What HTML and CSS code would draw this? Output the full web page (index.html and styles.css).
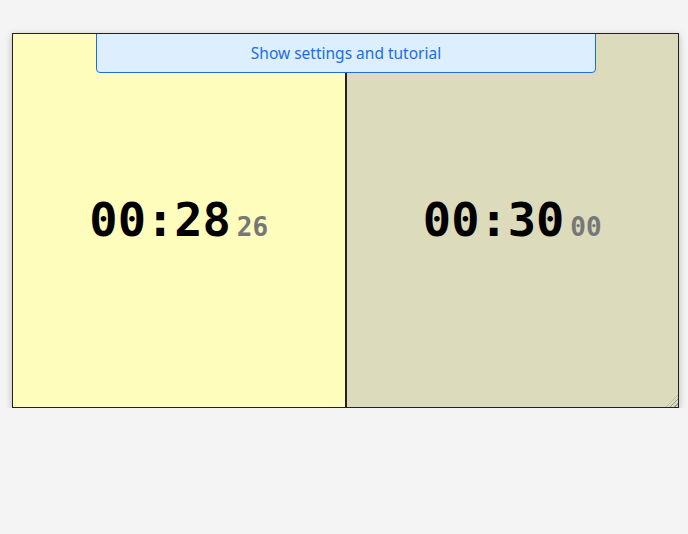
FILE: index.html
```html
<!DOCTYPE html>
<html>
<head>
<meta charset="utf-8">
<link rel="stylesheet" href="styles.css">
</head>
<body>
<div class="clock">
  <button class="toggle">Show settings and tutorial</button>
  <div class="side side-left">
    <div class="time"><span class="main">00:28</span><span class="frac">26</span></div>
  </div>
  <div class="side side-right">
    <div class="time"><span class="main">00:30</span><span class="frac">00</span></div>
  </div>
  <span class="grip"></span>
</div>
</body>
</html>
```
FILE: styles.css
```css
html, body {
  margin: 0;
  padding: 0;
  background: #f4f4f4;
}
body {
  padding: 33px 0 0 12px;
}
.clock {
  position: relative;
  width: 665px;
  height: 373px;
  border: 1px solid #222;
  display: flex;
  box-shadow: 0 2px 7px rgba(0, 0, 0, 0.25);
  overflow: hidden;
}
.toggle {
  position: absolute;
  top: -1px;
  left: 83px;
  width: 500px;
  height: 40px;
  box-sizing: border-box;
  background: #ddeeff;
  border: 1px solid #1a6fe6;
  border-radius: 0 0 4px 4px;
  color: #1a6fe6;
  font-family: "Noto Sans", sans-serif;
  font-size: 15.5px;
  padding: 0;
  cursor: pointer;
}
.side {
  flex: 1;
  display: flex;
  align-items: center;
  justify-content: center;
}
.side-left {
  background: #fffdbb;
  border-right: 2px solid #222;
}
.side-right {
  background: #dcdbbb;
}
.time {
  font-family: "DejaVu Sans Mono", monospace;
  font-weight: bold;
  display: flex;
  align-items: baseline;
  gap: 6px;
  margin-top: -2px;
}
.main {
  font-size: 47px;
  color: #000;
}
.frac {
  font-size: 26px;
  color: #777;
}
.grip {
  position: absolute;
  right: 0;
  bottom: 0;
  width: 12px;
  height: 12px;
  background: repeating-linear-gradient(135deg, transparent 0 2px, #9a9a90 2px 3px);
  clip-path: polygon(100% 0, 100% 100%, 0 100%);
}
```
